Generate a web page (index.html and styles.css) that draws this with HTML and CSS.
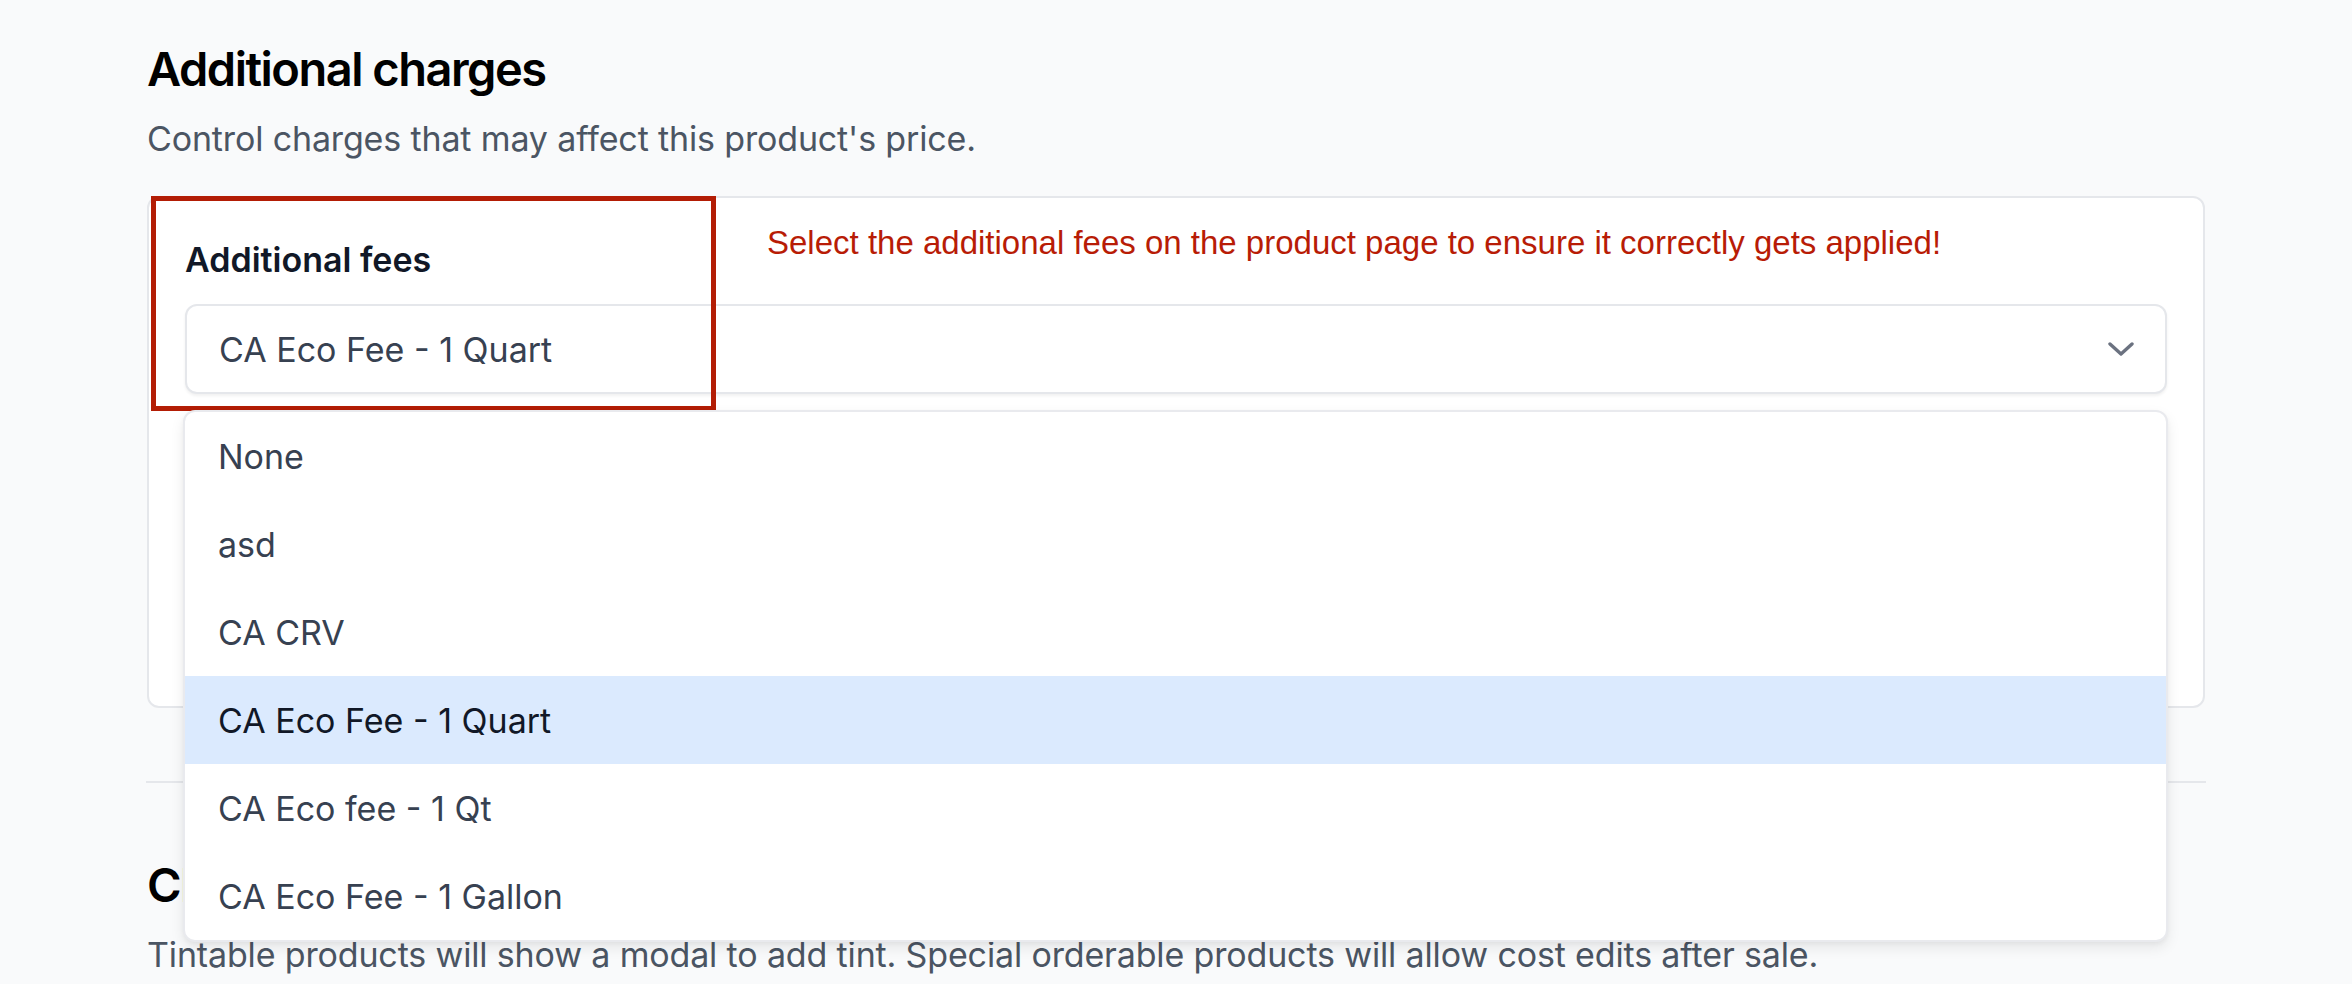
FILE: index.html
```html
<!DOCTYPE html>
<html lang="en">
<head>
<meta charset="utf-8">
<title>Additional charges</title>
<link rel="stylesheet" href="styles.css">
</head>
<body>
<main class="page">
  <section class="section">
    <h2 class="section-title">Additional charges</h2>
    <p class="section-desc">Control charges that may affect this product's price.</p>
    <div class="card">
      <div class="annot-box"></div>
      <p class="annot-text">Select the additional fees on the product page to ensure it correctly gets applied!</p>
      <label class="field-label">Additional fees</label>
      <div class="select-wrap">
        <div class="select">
          <span class="select-value">CA Eco Fee - 1 Quart</span>
          <svg class="chevron" viewBox="0 0 26 14" width="26" height="14" aria-hidden="true">
            <path d="M2 2 L13 12 L24 2" fill="none" stroke="#6b7280" stroke-width="3.4" stroke-linecap="round" stroke-linejoin="round"/>
          </svg>
        </div>
        <ul class="options">
          <li class="option">None</li>
          <li class="option">asd</li>
          <li class="option">CA CRV</li>
          <li class="option option-active">CA Eco Fee - 1 Quart</li>
          <li class="option">CA Eco fee - 1 Qt</li>
          <li class="option">CA Eco Fee - 1 Gallon</li>
        </ul>
      </div>
    </div>
  </section>
  <hr class="divider">
  <section class="section">
    <h2 class="section-title">Classification</h2>
    <p class="section-desc">Tintable products will show a modal to add tint. Special orderable products will allow cost edits after sale.</p>
  </section>
</main>
</body>
</html>
```

FILE: styles.css
```css
html, body {
  margin: 0;
  padding: 0;
  background: #f9fafb;
}
body {
  font-family: Inter, "Noto Sans", "Liberation Sans", sans-serif;
  color: #111827;
  overflow: hidden;
  height: 984px;
}
.page {
  padding: 37px 147px 0 147px;
}
.section-title {
  margin: 0;
  font-size: 47px;
  line-height: 64px;
  font-weight: 600;
  color: #000;
  letter-spacing: -1.5px;
}
.section-desc {
  margin: 14px 0 0 0;
  font-size: 34px;
  line-height: 48px;
  color: #4b5563;
  font-weight: 400;
  letter-spacing: -0.15px;
}
.card {
  position: relative;
  margin-top: 33px;
  background: #fff;
  border: 2px solid #e5e7eb;
  border-radius: 12px;
  padding: 38px 36px 312px 36px;
}
.field-label {
  display: block;
  font-size: 34px;
  line-height: 48px;
  font-weight: 600;
  color: #111827;
}
.select-wrap {
  position: relative;
  margin-top: 20px;
}
.select {
  display: flex;
  align-items: center;
  justify-content: space-between;
  height: 86px;
  padding: 0 31px 0 32px;
  border: 2px solid #e5e7eb;
  border-radius: 12px;
  background: #fff;
  box-shadow: 0 2px 3px rgba(0, 0, 0, 0.06);
}
.select-value {
  font-size: 34px;
  color: #374151;
}
.chevron {
  display: block;
}
.options {
  position: absolute;
  z-index: 3;
  top: 106px;
  left: -2px;
  width: 1985px;
  box-sizing: border-box;
  margin: 0;
  padding: 0;
  list-style: none;
  background: #fff;
  border: 2px solid #e9eaee;
  border-radius: 12px;
  box-shadow: 0 6px 14px rgba(0, 0, 0, 0.08), 0 2px 4px rgba(0, 0, 0, 0.04);
  overflow: hidden;
}
.option {
  height: 88px;
  display: flex;
  align-items: center;
  padding-left: 33px;
  font-size: 34px;
  color: #374151;
}
.option-active {
  background: #dbeafe;
  color: #111827;
}
.annot-box {
  position: absolute;
  z-index: 2;
  left: 2px;
  top: -2px;
  width: 565px;
  height: 215px;
  box-sizing: border-box;
  border: 5px solid #b31d05;
  pointer-events: none;
}
.annot-text {
  position: absolute;
  z-index: 2;
  left: 618px;
  top: 28px;
  margin: 0;
  font-family: "Liberation Sans", Arial, sans-serif;
  font-size: 33px;
  line-height: 33px;
  color: #b81c06;
  white-space: nowrap;
}
.divider {
  margin: 73px -1px 0 -1px;
  border: 0;
  height: 2px;
  background: #e5e7eb;
}
.section + .divider + .section .section-title {
  margin-top: 70px;
}
```
